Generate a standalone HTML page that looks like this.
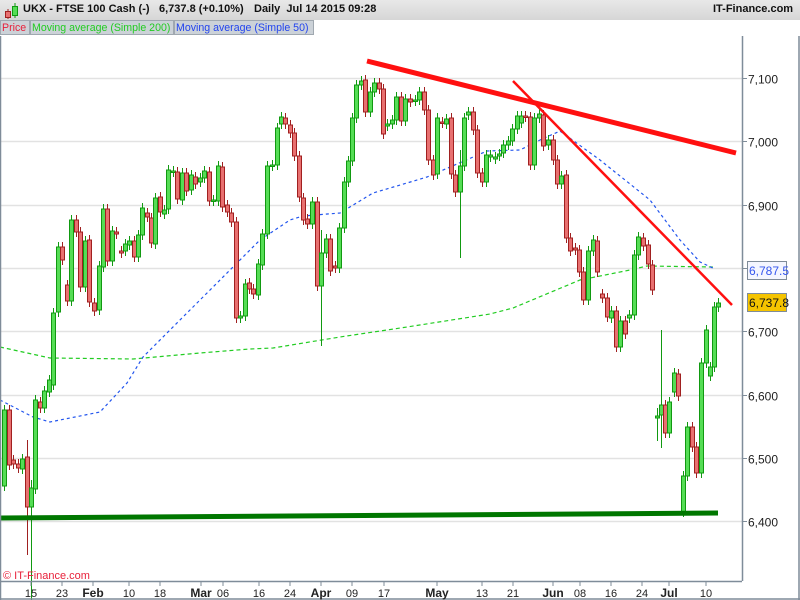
<!DOCTYPE html>
<html><head><meta charset="utf-8"><style>
html,body{margin:0;padding:0;width:800px;height:600px;overflow:hidden;background:#fff;font-family:"Liberation Sans",sans-serif;}
#hdr{position:absolute;left:0;top:0;width:800px;height:20px;background:linear-gradient(#e8e8e8,#d6d6d6);}
#hdr span{position:absolute;top:3px;font-size:11px;font-weight:bold;color:#111;white-space:nowrap;}
.lg{position:absolute;top:20px;height:15px;font-size:10.6px;line-height:15px;background:#ccd2d8;border:1px solid #a0a8b0;box-sizing:border-box;padding:0 1px;white-space:nowrap;overflow:hidden;}
svg{position:absolute;left:0;top:0;}
</style></head><body>
<svg id="s" width="800" height="600" xmlns="http://www.w3.org/2000/svg"></svg>
<div id="hdr">
<svg width="20" height="20" style="left:2px;top:1px"><line x1="6" y1="8" x2="6" y2="18" stroke="#a02020"/><rect x="3.5" y="10.5" width="5" height="6" fill="#e87070" stroke="#a02020"/><line x1="13" y1="2" x2="13" y2="17" stroke="#119911"/><rect x="10.5" y="5.5" width="5" height="9" fill="#55dd55" stroke="#119911"/></svg>
<span style="left:23px">UKX - FTSE 100 Cash (-)</span>
<span style="left:159px">6,737.8 (+0.10%)</span>
<span style="left:254px">Daily&nbsp; Jul 14 2015 09:28</span>
<span style="left:713px">IT-Finance.com</span>
</div>
<div class="lg" style="left:0;width:30px;color:#e8203a">Price</div>
<div class="lg" style="left:30px;width:144px;color:#22cc22">Moving average (Simple 200)</div>
<div class="lg" style="left:174px;width:140px;color:#2244ee">Moving average (Simple 50)</div>
<script>
var s=document.getElementById('s'),h='';
function Y(p){return 78+(7100-p)*0.633;}
[7100,7000,6900,6800,6700,6600,6500,6400].forEach(function(p){var y=Math.round(Y(p))+.5;
h+='<line x1="0" y1="'+y+'" x2="742" y2="'+y+'" stroke="#e2e2e2" stroke-width="1.5"/>';
h+='<line x1="742" y1="'+y+'" x2="747" y2="'+y+'" stroke="#7f8c99"/>';
if(p!=6800)h+='<text x="748" y="'+(y+5)+'" font-size="12" fill="#222">'+(p+'').replace(/^(\d)/,'$1,')+'</text>';});
h+='<polyline fill="none" stroke="#22cc22" stroke-width="1.2" stroke-dasharray="4,3" points="0,347 50,358 133,359 200,353 250,349 273,348 340,337 407,327 490,314 513,308 580,280 630,270 647,266 713,267"/>';
h+='<polyline fill="none" stroke="#2255ee" stroke-width="1.2" stroke-dasharray="3,3" points="0,400 33,417 50,422 100,412 127,383 143,357 200,300 250,250 260,240 290,220 303,216 340,213 373,193 407,183 427,177 487,151 520,150 540,140 560,131 600,160 650,200 680,240 700,262 715,269"/>';
var d=[[4,486,410],[9,410,465],[13,460,464],[18,464,468],[22,469,459],[27,457,507,440,555],[31,507,488,480,600],[35,489,400],[40,402,408],[44,408,391],[49,392,380],
[53,385,313],[58,312,247],[62,247,260],[67,285,301],[71,301,220],[76,220,232],[80,232,287],[85,287,241],[89,240,302],[94,303,311],[99,310,266],[103,267,209],[107,209,261],[112,261,231],[116,232,234],[121,251,253],[125,251,244],[129,245,241],[134,241,257],[138,257,235],[142,235,208],[147,213,217],[151,218,243],[155,244,198],[160,197,212],[164,214,210],[168,209,170],[173,172,171],[177,172,199],[182,200,173],[186,173,191],[191,190,175],[195,177,184],[200,182,178],[204,178,171],[209,172,201],[213,201,200],[218,201,166],[222,167,207],[227,205,212],[231,213,222],[236,222,318],[240,318,316],[245,316,284],[249,283,289],[253,289,294],[258,295,264],[262,265,234],[267,234,166],[272,166,165],[277,165,128],[281,124,117],[285,118,124],[290,125,133],[294,133,156],[299,156,197],[303,198,220],[307,219,224],[312,224,202],[317,202,286],[321,286,253,230,346],[326,253,239],[330,239,271],[335,266,268],[339,268,228],[344,228,182],[348,182,161],[352,161,118],[356,118,85],[361,85,81],[365,80,112],[370,112,92],[374,92,83],[379,83,89],[383,89,134],[387,126,124],[392,124,120],[396,120,97],[401,97,121],[405,121,99],[410,99,102],[415,101,100],[419,100,92],[424,92,110],[428,110,160],[433,160,175],[437,174,118],[442,122,123],[446,124,119],[451,118,174],[455,175,192],[460,192,166,150,258],[464,166,118],[468,115,112],[473,112,130],[477,130,173],[482,173,182],[486,182,155],[490,157,155],[495,159,157],[499,156,154],[503,153,145],[508,145,141],[512,141,129],[517,129,116],[521,123,116],[525,116,117],[530,117,165],[534,165,118],[539,118,114],[543,115,146],[548,145,140],[553,140,160],[557,160,184],[561,184,176],[566,175,238],[570,238,251],[575,248,250],[579,250,272],[583,272,300],[588,300,251],[593,251,240],[597,241,272],[602,294,298],[607,298,317],[611,318,311],[616,311,347],[620,347,321],[625,321,334],[629,318,315],[634,315,255],[638,255,237],[643,238,246],[648,245,264],[652,265,290],[657,418,416,408,441],[661,415,405,330,448],[665,405,433],[669,433,402],[674,392,373],[678,374,396],[683,512,476],[687,476,427],[692,427,447],[696,447,473],[701,473,363],[706,363,330],[710,376,367],[714,367,307],[718,307,303]];
d.forEach(function(c){var x=c[0],o=c[1],cl=c[2],g=cl<o,t=Math.min(o,cl),b=Math.max(o,cl);
var hi=c[3]||t-5,lo=c[4]||b+5;var st=g?'#119911':'#a02020',f=g?'#55dd55':'#e87070';
h+='<line x1="'+(x+.5)+'" y1="'+hi+'" x2="'+(x+.5)+'" y2="'+lo+'" stroke="'+st+'"/>';
h+='<rect x="'+(x-1.5)+'" y="'+t+'" width="4" height="'+Math.max(b-t,1.5)+'" fill="'+f+'" stroke="'+st+'"/>';});
h+='<line x1="367" y1="61" x2="736" y2="153" stroke="#ff1010" stroke-width="5"/>';
h+='<line x1="513" y1="81" x2="732" y2="305" stroke="#ff1010" stroke-width="2.5"/>';
h+='<line x1="0" y1="518" x2="718" y2="513" stroke="#007700" stroke-width="5"/>';
h+='<line x1="742.5" y1="36" x2="742.5" y2="581" stroke="#7f8c99" stroke-width="1.5"/>';
h+='<line x1="0" y1="581.5" x2="742" y2="581.5" stroke="#7f8c99" stroke-width="1.5"/>';
h+='<line x1="0.5" y1="36" x2="0.5" y2="600" stroke="#7f8c99" stroke-width="1.5"/>';
h+='<line x1="0" y1="599" x2="800" y2="599" stroke="#7f8c99" stroke-width="1.5"/>';
h+='<line x1="799" y1="36" x2="799" y2="600" stroke="#7f8c99" stroke-width="1.5"/>';
h+='<rect x="747.5" y="261.5" width="39" height="18" fill="#f4f6ff" stroke="#7f8c99"/><text x="749" y="275" font-size="12" fill="#3355ee">6,787.5</text>';
h+='<rect x="747.5" y="293.5" width="39" height="18" fill="#f5c400" stroke="#7f8c99"/><text x="749" y="307" font-size="12" fill="#111">6,737.8</text>';
[[31,'15'],[62,'23'],[93,'Feb',1],[129,'10'],[160,'18'],[201,'Mar',1],[223,'06'],[259,'16'],[290,'24'],[321,'Apr',1],[352,'09'],[384,'17'],[437,'May',1],[482,'13'],[513,'21'],[553,'Jun',1],[580,'08'],[611,'16'],[642,'24'],[669,'Jul',1],[706,'10']].forEach(function(a){
h+='<line x1="'+a[0]+'" y1="581" x2="'+a[0]+'" y2="586" stroke="#7f8c99"/>';
h+='<text x="'+a[0]+'" y="597" font-size="'+(a[2]?12:11)+'" text-anchor="middle" fill="#222"'+(a[2]?' font-weight="bold"':'')+'>'+a[1]+'</text>';});
h+='<text x="3" y="579" font-size="11" fill="#e8203a">© IT-Finance.com</text>';
s.innerHTML=h;
</script>
</body></html>
